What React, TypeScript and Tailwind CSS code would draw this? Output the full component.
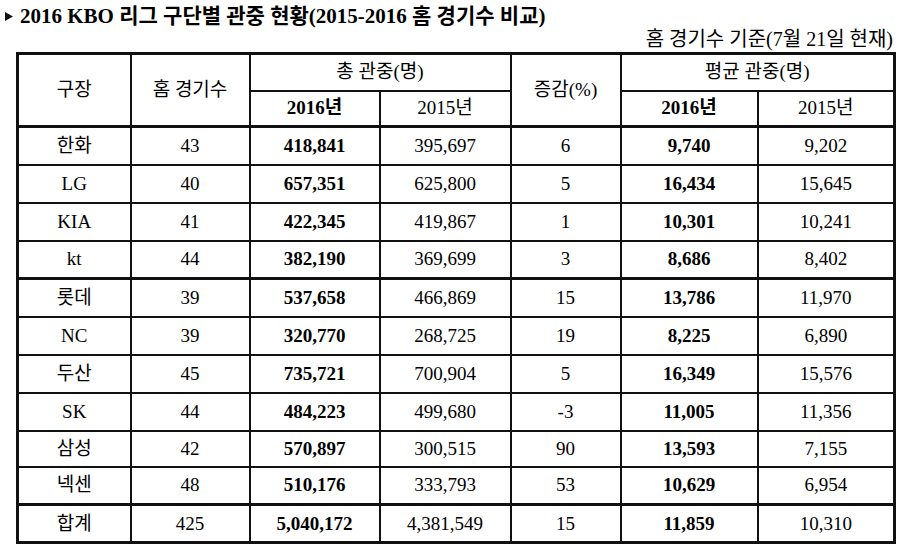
import React from "react";

const rows: [string, string, string, string, string, string, string][] = [
  ["한화", "43", "418,841", "395,697", "6", "9,740", "9,202"],
  ["LG", "40", "657,351", "625,800", "5", "16,434", "15,645"],
  ["KIA", "41", "422,345", "419,867", "1", "10,301", "10,241"],
  ["kt", "44", "382,190", "369,699", "3", "8,686", "8,402"],
  ["롯데", "39", "537,658", "466,869", "15", "13,786", "11,970"],
  ["NC", "39", "320,770", "268,725", "19", "8,225", "6,890"],
  ["두산", "45", "735,721", "700,904", "5", "16,349", "15,576"],
  ["SK", "44", "484,223", "499,680", "-3", "11,005", "11,356"],
  ["삼성", "42", "570,897", "300,515", "90", "13,593", "7,155"],
  ["넥센", "48", "510,176", "333,793", "53", "10,629", "6,954"],
  ["합계", "425", "5,040,172", "4,381,549", "15", "11,859", "10,310"],
];

const thickTop = new Set([0, 4, 10]);

export default function App() {
  const font = { fontFamily: '"Liberation Serif", "Noto Sans CJK KR", serif' };
  return (
    <div className="w-[900px] h-[557px] bg-white text-black pt-[4px] overflow-hidden" style={font}>
      <div className="h-[23px] flex items-center pl-[5px] text-[21px] leading-[24px] font-bold">
        <svg width="8" height="9" viewBox="0 0 8 9" className="mr-[7px] mt-[1px]">
          <polygon points="0,0 8,4.5 0,9" fill="#111" />
        </svg>
        <span>2016 KBO 리그 구단별 관중 현황(2015-2016 홈 경기수 비교)</span>
      </div>
      <div className="h-[24px] text-right pr-[7px] text-[20px] leading-[24px]">
        홈 경기수 기준(7월 21일 현재)
      </div>
      <table className="mt-[1px] ml-[16px] w-[877px] table-fixed border-collapse border-[3px] border-[#111] text-[19px] leading-[22px]">
        <colgroup>
          <col className="w-[113px]" />
          <col className="w-[119px]" />
          <col className="w-[130px]" />
          <col className="w-[131px]" />
          <col className="w-[110px]" />
          <col className="w-[137px]" />
          <col className="w-[137px]" />
        </colgroup>
        <thead>
          <tr className="h-[37px]">
            <th rowSpan={2} className="border-2 border-[#111] font-normal text-center align-middle">구장</th>
            <th rowSpan={2} className="border-2 border-[#111] font-normal text-center align-middle">홈 경기수</th>
            <th colSpan={2} className="border-2 border-[#111] font-normal text-center align-middle">총 관중(명)</th>
            <th rowSpan={2} className="border-2 border-[#111] font-normal text-center align-middle">증감(%)</th>
            <th colSpan={2} className="border-2 border-[#111] font-normal text-center align-middle">평균 관중(명)</th>
          </tr>
          <tr className="h-[36px]">
            <th className="border-2 border-[#111] font-bold text-center align-middle">2016년</th>
            <th className="border-2 border-[#111] font-normal text-center align-middle">2015년</th>
            <th className="border-2 border-[#111] font-bold text-center align-middle">2016년</th>
            <th className="border-2 border-[#111] font-normal text-center align-middle">2015년</th>
          </tr>
        </thead>
        <tbody>
          {rows.map((r, i) => (
            <tr key={r[0]} className={i === 8 ? "h-[36px]" : "h-[38px]"}>
              {r.map((c, j) => (
                <td
                  key={j}
                  className={
                    "border-2 border-[#111] text-center align-middle " +
                    (thickTop.has(i) ? "border-t-[3px] " : "") +
                    (j === 2 || j === 5 ? "font-bold" : "font-normal")
                  }
                >
                  {c}
                </td>
              ))}
            </tr>
          ))}
        </tbody>
      </table>
    </div>
  );
}
